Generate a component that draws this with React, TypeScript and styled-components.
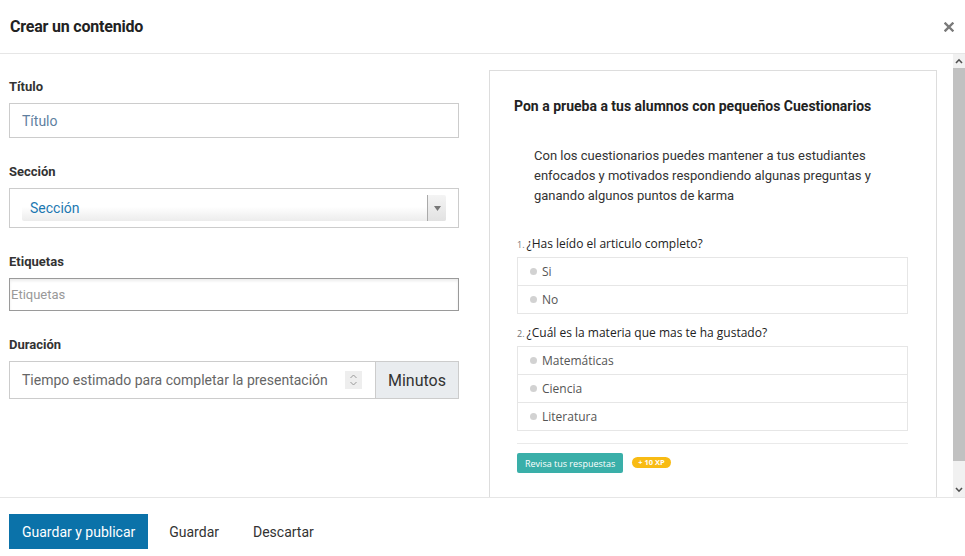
import React from 'react';
import styled, { createGlobalStyle } from 'styled-components';

const GlobalStyle = createGlobalStyle`
  html, body {
    margin: 0;
    padding: 0;
    background: #fff;
  }
  body {
    font-family: Roboto, 'Liberation Sans', Arial, sans-serif;
    color: #333;
  }
  * {
    box-sizing: border-box;
  }
`;

interface IOption {
  label: string;
}

const questions: { title: string; options: IOption[] }[] = [
  {
    title: '¿Has leído el articulo completo?',
    options: [{ label: 'Si' }, { label: 'No' }],
  },
  {
    title: '¿Cuál es la materia que mas te ha gustado?',
    options: [
      { label: 'Matemáticas' },
      { label: 'Ciencia' },
      { label: 'Literatura' },
    ],
  },
];

export default function App() {
  return (
    <>
      <GlobalStyle />
      <Modal>
        <Header>
          <HeaderTitle>Crear un contenido</HeaderTitle>
          <CloseButton aria-label="Cerrar">
            <svg width="10" height="10" viewBox="0 0 10 10">
              <path
                d="M1.5 1.5 L8.5 8.5 M8.5 1.5 L1.5 8.5"
                stroke="#7a7a7a"
                strokeWidth="2.4"
                strokeLinecap="square"
              />
            </svg>
          </CloseButton>
        </Header>

        <Body>
          <BodyContent>
            <FormColumn>
              <Field>
                <Label>Título</Label>
                <TextInput>Título</TextInput>
              </Field>
              <Field>
                <Label>Sección</Label>
                <SelectFrame>
                  <SelectControl>
                    <SelectValue>Sección</SelectValue>
                    <SelectArrow>
                      <svg width="7" height="5" viewBox="0 0 7 5">
                        <path d="M0 0 H7 L3.5 5 Z" fill="#777" />
                      </svg>
                    </SelectArrow>
                  </SelectControl>
                </SelectFrame>
              </Field>
              <Field>
                <Label>Etiquetas</Label>
                <TagsInput>Etiquetas</TagsInput>
              </Field>
              <Field>
                <Label>Duración</Label>
                <InputGroup>
                  <NumberInput>
                    <span>Tiempo estimado para completar la presentación</span>
                    <Spinner>
                      <svg width="9" height="14" viewBox="0 0 9 14">
                        <path
                          d="M1.5 5 L4.5 2 L7.5 5 M1.5 9 L4.5 12 L7.5 9"
                          fill="none"
                          stroke="#999"
                          strokeWidth="1"
                        />
                      </svg>
                    </Spinner>
                  </NumberInput>
                  <Addon>Minutos</Addon>
                </InputGroup>
              </Field>
            </FormColumn>

            <Preview>
              <PreviewTitle>
                Pon a prueba a tus alumnos con pequeños Cuestionarios
              </PreviewTitle>
              <PreviewText>
                Con los cuestionarios puedes mantener a tus estudiantes
                enfocados y motivados respondiendo algunas preguntas y ganando
                algunos puntos de karma
              </PreviewText>
              <Quiz>
                {questions.map((q, i) => (
                  <Question key={i} first={i === 0}>
                    <QuestionTitle>
                      <QuestionNumber>{i + 1}.</QuestionNumber>
                      {q.title}
                    </QuestionTitle>
                    <OptionList>
                      {q.options.map((o) => (
                        <OptionItem key={o.label}>
                          <Dot />
                          {o.label}
                        </OptionItem>
                      ))}
                    </OptionList>
                  </Question>
                ))}
                <QuizDivider />
                <QuizFooter>
                  <CheckButton>Revisa tus respuestas</CheckButton>
                  <XpBadge>+ 10 XP</XpBadge>
                </QuizFooter>
              </Quiz>
            </Preview>
          </BodyContent>

          <ScrollRail>
            <ScrollButton>
              <svg width="8" height="6" viewBox="0 0 8 6">
                <path
                  d="M1 5 L4 1.8 L7 5"
                  fill="none"
                  stroke="#505050"
                  strokeWidth="1.6"
                />
              </svg>
            </ScrollButton>
            <ScrollTrack>
              <ScrollThumb />
            </ScrollTrack>
            <ScrollButton>
              <svg width="8" height="6" viewBox="0 0 8 6">
                <path
                  d="M1 1 L4 4.2 L7 1"
                  fill="none"
                  stroke="#505050"
                  strokeWidth="1.6"
                />
              </svg>
            </ScrollButton>
          </ScrollRail>
        </Body>

        <Footer>
          <PrimaryButton>Guardar y publicar</PrimaryButton>
          <LinkButton>Guardar</LinkButton>
          <LinkButton>Descartar</LinkButton>
        </Footer>
      </Modal>
    </>
  );
}

const Modal = styled.div`
  width: 965px;
  height: 556px;
  display: flex;
  flex-direction: column;
  overflow: hidden;
`;

const Header = styled.div`
  height: 54px;
  flex-shrink: 0;
  display: flex;
  align-items: center;
  justify-content: space-between;
  padding: 0 10px 1px 10px;
  border-bottom: 1px solid #e6e6e6;
`;

const HeaderTitle = styled.h1`
  margin: 0;
  font-size: 16px;
  font-weight: 700;
  color: #222;
  letter-spacing: -0.2px;
`;

const CloseButton = styled.div`
  width: 12px;
  height: 12px;
  display: flex;
  align-items: center;
  justify-content: center;
  margin-top: 1px;
`;

const Body = styled.div`
  flex: 1;
  min-height: 0;
  display: flex;
  overflow: hidden;
`;

const BodyContent = styled.div`
  flex: 1;
  display: flex;
  align-items: flex-start;
  gap: 30px;
  padding: 16px 16px 0 9px;
`;

const ScrollRail = styled.div`
  width: 12px;
  flex-shrink: 0;
  display: flex;
  flex-direction: column;
  background: #f1f1f1;
`;

const ScrollButton = styled.div`
  height: 14px;
  display: flex;
  align-items: center;
  justify-content: center;
`;

const ScrollTrack = styled.div`
  flex: 1;
`;

const ScrollThumb = styled.div`
  height: 393px;
  background: #c1c1c1;
`;

const FormColumn = styled.div`
  width: 450px;
  flex-shrink: 0;
  display: flex;
  flex-direction: column;
  gap: 26px;
  padding-top: 9px;
`;

const Field = styled.div`
  display: flex;
  flex-direction: column;
  gap: 8px;
`;

const Label = styled.label`
  font-size: 13px;
  line-height: 16px;
  font-weight: 700;
  color: #333;
`;

const TextInput = styled.div`
  height: 35px;
  display: flex;
  align-items: center;
  padding: 0 12px;
  border: 1px solid #ccc;
  font-size: 14px;
  color: #5f7f9f;
`;

const SelectFrame = styled.div`
  height: 40px;
  border: 1px solid #ccc;
  padding: 6px 12px;
`;

const SelectControl = styled.div`
  height: 26px;
  display: flex;
  align-items: center;
  border-radius: 2px;
  background: linear-gradient(to bottom, #fff 45%, #ececec 100%);
`;

const SelectValue = styled.span`
  flex: 1;
  padding-left: 8px;
  font-size: 14px;
  color: #1c78b1;
`;

const SelectArrow = styled.div`
  width: 19px;
  height: 100%;
  display: flex;
  align-items: center;
  justify-content: center;
  border-left: 1px solid #aaa;
  border-radius: 0 2px 2px 0;
  background: linear-gradient(to bottom, #f4f4f4, #e2e2e2);
`;

const TagsInput = styled.div`
  height: 33px;
  display: flex;
  align-items: center;
  padding: 0 1px;
  border: 1px solid #9a9a9a;
  box-shadow: inset 0 2px 3px rgba(0, 0, 0, 0.08);
  font-size: 13px;
  color: #999;
`;

const InputGroup = styled.div`
  display: flex;
  height: 38px;
`;

const NumberInput = styled.div`
  flex: 1;
  display: flex;
  align-items: center;
  justify-content: space-between;
  padding: 0 13px 0 12px;
  border: 1px solid #ccc;
  border-right: none;
  font-size: 14px;
  color: #666;
`;

const Spinner = styled.div`
  width: 17px;
  height: 18px;
  display: flex;
  align-items: center;
  justify-content: center;
  background: #eee;
`;

const Addon = styled.div`
  width: 84px;
  display: flex;
  align-items: center;
  justify-content: center;
  border: 1px solid #ccc;
  background: #e9ecef;
  font-size: 16px;
  color: #333;
`;

const Preview = styled.div`
  width: 448px;
  flex-shrink: 0;
  border: 1px solid #ddd;
  padding: 25px 28px 35px 24px;
`;

const PreviewTitle = styled.h2`
  margin: 0;
  font-size: 14px;
  line-height: 20px;
  font-weight: 700;
  color: #222;
`;

const PreviewText = styled.p`
  margin: 30px 0 0 20px;
  width: 360px;
  font-size: 13px;
  line-height: 20px;
  color: #333;
`;

const Quiz = styled.div`
  margin: 29px 0 0 3px;
  font-family: 'Open Sans', 'Liberation Sans', sans-serif;
`;

const Question = styled.div<{ first: boolean }>`
  margin-top: ${({ first }) => (first ? '0' : '10px')};
`;

const QuestionTitle = styled.div`
  font-size: 12px;
  line-height: 17px;
  color: #222;
  margin-bottom: 4px;
`;

const QuestionNumber = styled.span`
  font-size: 9px;
  color: #777;
  margin-right: 2px;
`;

const OptionList = styled.ul`
  margin: 0;
  padding: 0;
  list-style: none;
  border: 1px solid #e6e6e6;
`;

const OptionItem = styled.li`
  height: 27px;
  display: flex;
  align-items: center;
  padding-left: 12px;
  font-size: 12px;
  color: #555;
  & + & {
    height: 28px;
    border-top: 1px solid #e6e6e6;
  }
`;

const Dot = styled.span`
  width: 7px;
  height: 7px;
  border-radius: 50%;
  background: #d2d2d2;
  margin-right: 5px;
`;

const QuizDivider = styled.hr`
  margin: 12px 0 0 0;
  border: none;
  border-top: 1px solid #eaeaea;
`;

const QuizFooter = styled.div`
  display: flex;
  align-items: center;
  gap: 9px;
  margin-top: 9px;
`;

const CheckButton = styled.div`
  height: 20px;
  padding: 0 8px;
  display: flex;
  align-items: center;
  border-radius: 2px;
  background: #3aafa9;
  color: #fff;
  font-size: 9px;
`;

const XpBadge = styled.span`
  height: 11px;
  padding: 0 6px;
  display: flex;
  align-items: center;
  border-radius: 6px;
  background: #f8bb14;
  color: #fff;
  font-size: 7.5px;
  font-weight: 700;
  margin-top: -2px;
`;

const Footer = styled.div`
  height: 59px;
  flex-shrink: 0;
  display: flex;
  align-items: flex-start;
  padding: 16px 9px 0 9px;
  border-top: 1px solid #e6e6e6;
`;

const PrimaryButton = styled.button`
  height: 35px;
  padding: 0 13px;
  margin-right: 8px;
  border: none;
  background: #0b72a9;
  color: #fff;
  font-family: Roboto, sans-serif;
  font-size: 14px;
`;

const LinkButton = styled.button`
  height: 35px;
  padding: 0 13px;
  margin-right: 8px;
  border: none;
  background: transparent;
  color: #333;
  font-family: Roboto, sans-serif;
  font-size: 14px;
`;
